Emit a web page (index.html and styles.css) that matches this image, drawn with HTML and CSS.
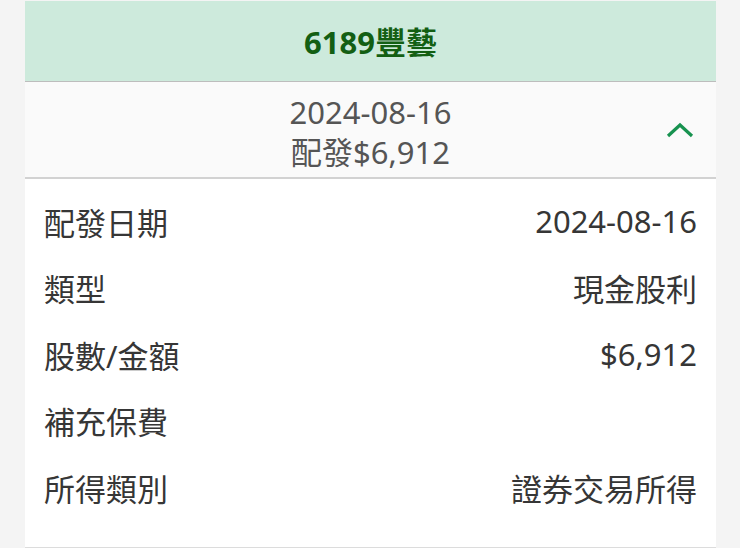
FILE: index.html
```html
<!DOCTYPE html>
<html lang="zh-Hant">
<head>
<meta charset="utf-8">
<link rel="stylesheet" href="styles.css">
</head>
<body>
<div class="card">
  <div class="card-head">6189豐藝</div>
  <div class="summary">
    <div class="summary-text">
      <div class="summary-line">2024-08-16</div>
      <div class="summary-line">配發$6,912</div>
    </div>
    <svg class="chevron" width="28" height="16" viewBox="0 0 28 16">
      <path d="M2 14 L14 3 L26 14" fill="none" stroke="#17924f" stroke-width="3.2"/>
    </svg>
  </div>
  <div class="details">
    <div class="row"><span class="label">配發日期</span><span class="value">2024-08-16</span></div>
    <div class="row"><span class="label">類型</span><span class="value">現金股利</span></div>
    <div class="row"><span class="label">股數/金額</span><span class="value">$6,912</span></div>
    <div class="row"><span class="label">補充保費</span><span class="value"></span></div>
    <div class="row"><span class="label">所得類別</span><span class="value">證券交易所得</span></div>
  </div>
</div>
</body>
</html>
```
FILE: styles.css
```css
html, body {
  margin: 0;
  padding: 0;
  background: #f4f4f4;
  font-family: "Noto Sans", "Noto Sans CJK TC", sans-serif;
}
body {
  padding: 1px 24px 0 25px;
}
.card {
  background: #ffffff;
  border-bottom: 2px solid #dcdcdc;
}
.card-head {
  height: 81px;
  box-sizing: border-box;
  padding-bottom: 2px;
  background: #cdeadc;
  border-bottom: 1px solid #bdbdbd;
  display: flex;
  align-items: center;
  justify-content: center;
  color: #135f13;
  font-weight: bold;
  font-size: 31px;
}
.summary {
  height: 97px;
  box-sizing: border-box;
  padding-top: 4px;
  background: #fafafa;
  border-bottom: 2px solid #d2d2d2;
  position: relative;
  display: flex;
  align-items: center;
  justify-content: center;
}
.summary-text {
  text-align: center;
  color: #555555;
  font-size: 29px;
}
.summary-line {
  height: 40px;
  line-height: 40px;
  font-size: 31px;
}
.chevron {
  position: absolute;
  right: 22px;
  top: 40px;
}
.details {
  padding: 9px 19px 26px 19px;
}
.row {
  display: flex;
  justify-content: space-between;
  align-items: center;
  height: 66.5px;
  color: #363636;
  font-size: 31px;
}
```
